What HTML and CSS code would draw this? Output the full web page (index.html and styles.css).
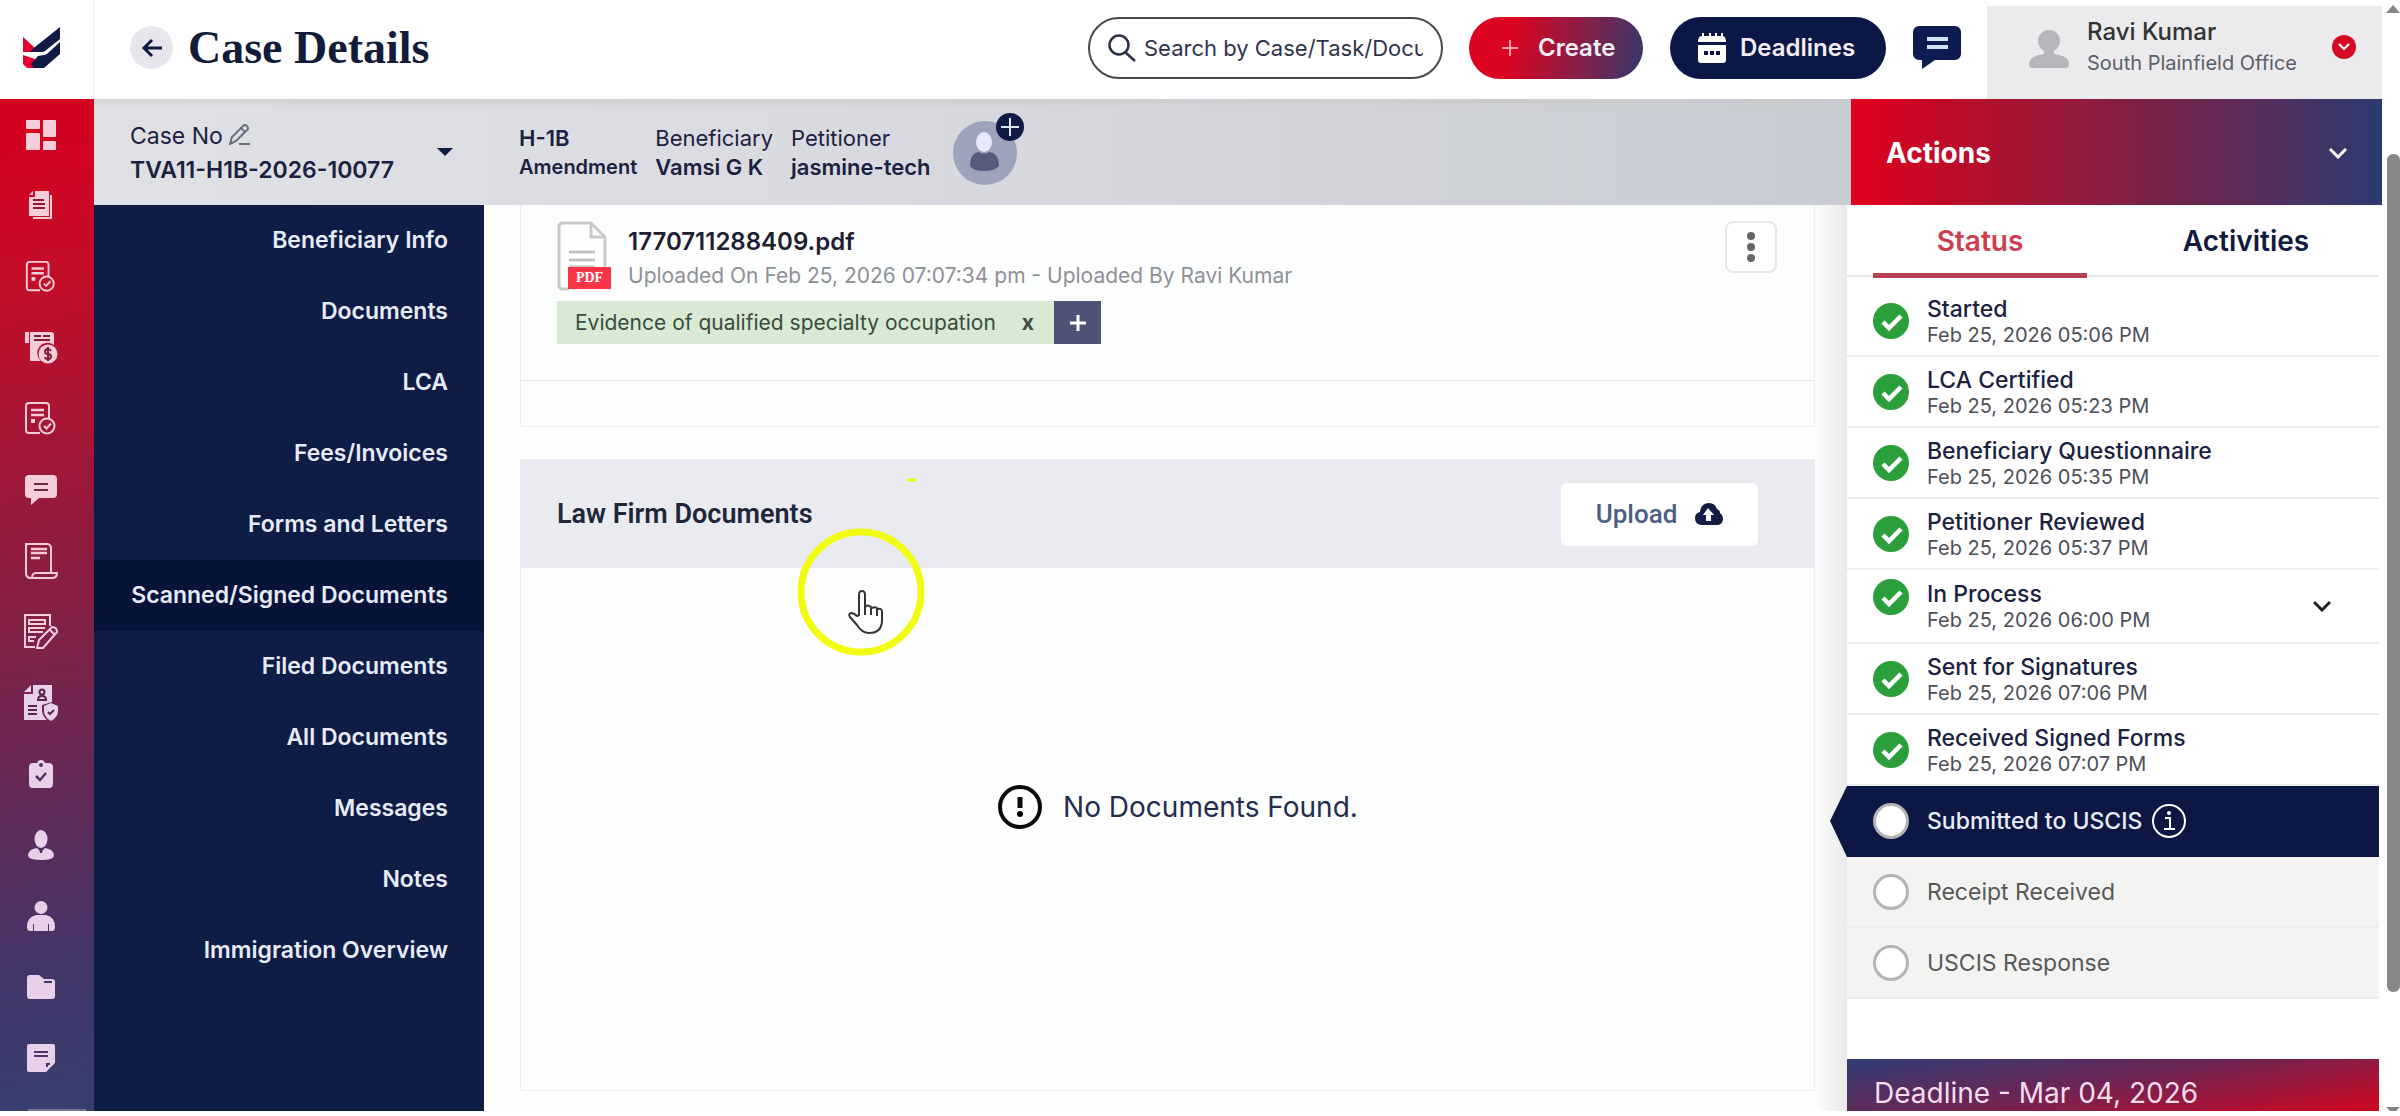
FILE: index.html
```html
<!DOCTYPE html>
<html lang="en">
<head>
<meta charset="utf-8">
<title>Case Details</title>
<link rel="stylesheet" href="styles.css">
</head>
<body>
<svg class="sprite" aria-hidden="true">
  <symbol id="check" viewBox="0 0 36 36"><circle cx="18" cy="18" r="18" fill="#2a9f3c"/><path d="M10 19l6 6 12-12" fill="none" stroke="#fff" stroke-width="4.500"/></symbol>
  <symbol id="doc-check" viewBox="0 0 36 36"><g fill="none" stroke="currentColor" stroke-width="2"><path d="M17 32H6a3 3 0 0 1-3-3V5a3 3 0 0 1 3-3h17a3 3 0 0 1 3 3v12"/><circle cx="24" cy="25" r="7.500"/><path d="M21 25l2.500 2.500 4.500-5"/><path d="M8 9h13M8 14h13" stroke-width="2.500"/><path d="M8 20h4" stroke-width="4"/></g></symbol>
</svg>
<div class="app">
  <aside class="rail">
    <a class="logo" href="#" aria-label="Home"><svg width="38" height="42" viewBox="0 0 38 42"><path fill="#e4002b" d="M1 10l12 11-2 4H1zM1 28l12 4v9H5l-4-4z"/><path fill="#0f1a45" d="M8 25l5-5L38 0v12L23 24q-1 1-3 1z"/><path fill="#0f1a45" d="M9 37l7-8 6-1q2 0 4-2l12-11v12L22 41H12z"/></svg></a>
    <nav class="rail-nav" aria-label="Main">
      <a href="#" aria-label="Dashboard"><svg width="30" height="30" viewBox="0 0 30 30" fill="currentColor"><rect width="14" height="9" rx="1"/><rect y="13" width="14" height="17" rx="1"/><rect x="17" width="13" height="17" rx="1"/><rect x="17" y="21" width="13" height="9" rx="1"/></svg></a>
      <a href="#" aria-label="Cases"><svg width="26" height="30" viewBox="0 0 26 30"><path fill="currentColor" d="M7 0h14v25H1V6h6zM5 0v4H1z"/><path d="M23 4v23H5" fill="none" stroke="currentColor" stroke-width="2"/><path d="M5 9h11M5 13h12M5 17h12" stroke="#8f1730" stroke-width="2"/></svg></a>
      <a href="#" aria-label="Approvals"><svg width="34" height="34"><use href="#doc-check"/></svg></a>
      <a href="#" aria-label="Invoices"><svg width="34" height="34" viewBox="0 0 34 34"><path fill="currentColor" d="M1 1h4v11H1zM6 1h21q3 0 3 3v10a10 10 0 0 0-13 16H6z"/><circle cx="24" cy="23" r="9.500" fill="currentColor"/><path d="M10 5h7M19 5h7M10 9h16" stroke="#7d1c35" stroke-width="2"/><path d="M27 20q-1-2-3-2-3 0-3 2.500t3 2.500 3 2.500-3 2.500q-3 0-3-2M24 16v14" fill="none" stroke="#7d1c35" stroke-width="2"/></svg></a>
      <a href="#" aria-label="Petitions"><svg width="36" height="36"><use href="#doc-check"/></svg></a>
      <a href="#" aria-label="Messages"><svg width="32" height="30" viewBox="0 0 32 30"><path fill="currentColor" d="M4 0h24a4 4 0 0 1 4 4v15a4 4 0 0 1-4 4H14l-8 7v-7H4a4 4 0 0 1-4-4V4a4 4 0 0 1 4-4z"/><path d="M9 9h14M9 15h14" stroke="#6d2740" stroke-width="2"/></svg></a>
      <a href="#" aria-label="Notices"><svg width="34" height="36" viewBox="0 0 34 36"><g fill="none" stroke="currentColor" stroke-width="2"><path d="M27 29V5a4 4 0 0 0-4-4H2v29q0 5 5 5h21q5 0 5-5H12q-4 0-4 5"/><path d="M7 6h16M7 10h16M7 15h9" stroke-width="2.500"/></g></svg></a>
      <a href="#" aria-label="Drafts"><svg width="36" height="36" viewBox="0 0 36 36"><g fill="none" stroke="currentColor" stroke-width="2"><path d="M12 33H2V1h25v11"/><path d="M6 6h16v4H6zM20 18H6v-4h16M13 23H6v4h5"/><path d="M14 34l2-8 13-13q5 0 5 5L20 34zM27 16l5 5"/></g></svg></a>
      <a href="#" aria-label="Compliance"><svg width="36" height="38" viewBox="0 0 36 38"><path fill="currentColor" d="M10 1h19v17l-10 3v6q1 6 5 9H1V10h9zM8 1v7H1z"/><path fill="currentColor" d="M28 19l7 3v6q-1 6-7 9-6-3-7-9v-6z"/><g fill="none" stroke="#5a2548" stroke-width="2"><circle cx="19" cy="8" r="2.500"/><path d="M15 16q0-4 4-4t4 4zM5 22h9M5 26h9M5 30h9M25 28l2 2 4-4"/></g></svg></a>
      <a href="#" aria-label="Tasks"><svg width="24" height="28" viewBox="0 0 24 28"><path fill="currentColor" d="M4 3h4q1-3 4-3t4 3h4q4 0 4 4v17q0 4-4 4H4q-4 0-4-4V7q0-4 4-4z"/><path d="M7 16l4 4 6-7" fill="none" stroke="#55305c" stroke-width="2.500"/><circle cx="12" cy="5" r="2" fill="#55305c"/></svg></a>
      <a href="#" aria-label="Attorneys"><svg width="26" height="30" viewBox="0 0 26 30" fill="currentColor"><ellipse cx="13" cy="9" rx="6.500" ry="9"/><path d="M9 18l4 4 4-4q9 1 9 8-1 4-13 4T0 26q0-7 9-8z"/><path d="M11 18h4l-1 5h-2z" fill="#55305c"/></svg></a>
      <a href="#" aria-label="Clients"><svg width="28" height="30" viewBox="0 0 28 30" fill="currentColor"><circle cx="14" cy="6.500" r="6.500"/><path d="M9 14h10q9 2 9 12 0 4-3 4h-3v-7h-1v7H7v-7H6v7H3q-3 0-3-4 0-10 9-12z"/></svg></a>
      <a href="#" aria-label="Files"><svg width="28" height="24" viewBox="0 0 28 24"><path fill="currentColor" d="M3 0h9l5 4h8q3 0 3 3v14q0 3-3 3H3q-3 0-3-3V3q0-3 3-3z"/><path d="M17 7h8" stroke="#46356b" stroke-width="2"/></svg></a>
      <a href="#" aria-label="Notes"><svg width="28" height="28" viewBox="0 0 28 28"><path fill="currentColor" d="M2 0h24q2 0 2 2v17l-9 9H2q-2 0-2-2V2q0-2 2-2z"/><path d="M7 8h14M7 12h14M20 23v-3h3" fill="none" stroke="#46356b" stroke-width="2"/></svg></a>
    </nav>
    <div class="rail-foot"></div>
  </aside>

  <div class="page">
    <header class="topbar">
      <button class="back" aria-label="Back"><svg width="22" height="20" viewBox="0 0 22 20" fill="none" stroke="#0f1a45" stroke-width="3"><path d="M21 10H3M11 2l-8 8 8 8"/></svg></button>
      <h1>Case Details</h1>
      <label class="search">
        <svg width="28" height="28" viewBox="0 0 28 28" fill="none" stroke="#2c3246" stroke-width="2.500"><circle cx="11" cy="11" r="9.500"/><path d="M17 18l10 9"/></svg>
        <input type="text" aria-label="Search" placeholder="Search by Case/Task/Document">
      </label>
      <button class="pill create"><svg width="18" height="18" viewBox="0 0 18 18" stroke="#f7a5b0" stroke-width="2"><path d="M9 1v16M1 9h16"/></svg>Create</button>
      <button class="pill deadlines"><svg width="28" height="30" viewBox="0 0 28 30"><path fill="#fff" d="M0 9q0-5 3-6h1V0h2v3h5V0h2v3h4V0h2v3h4V0h2v3q3 1 3 6zM0 12h28v15q0 3-3 3H3q-3 0-3-3z"/><path d="M6 20h4M12 20h4M18 20h4" stroke="#0b1744" stroke-width="4"/></svg>Deadlines</button>
      <button class="chat" aria-label="Messages"><svg width="48" height="43" viewBox="0 0 48 43"><path fill="#0e1b52" d="M6 0h36a6 6 0 0 1 6 6v22a6 6 0 0 1-6 6H22L9 43v-9H6a6 6 0 0 1-6-6V6a6 6 0 0 1 6-6z"/><path d="M14 13h21M14 21h21" stroke="#d5e2f5" stroke-width="4"/></svg></button>
      <div class="user">
        <svg width="40" height="38" viewBox="0 0 40 38" fill="#b4b6ba"><ellipse cx="20" cy="11" rx="11" ry="11"/><path d="M15 20h10v4q15 2 15 10 0 4-4 4H4q-4 0-4-4 0-8 15-10z"/></svg>
        <div class="user-text"><strong>Ravi Kumar</strong><span>South Plainfield Office</span></div>
        <button class="user-more" aria-label="Account menu"><svg width="24" height="24" viewBox="0 0 24 24"><circle cx="12" cy="12" r="12" fill="#d50b26"/><path d="M7 9l5 5 5-5" fill="none" stroke="#fff" stroke-width="2"/></svg></button>
      </div>
    </header>

    <div class="band">
      <section class="casebar">
        <div class="case-no">
          <div class="pair"><span>Case No <svg class="pen" width="22" height="22" viewBox="0 0 22 22" fill="none" stroke="#6a6f80" stroke-width="2"><path d="M1 21l2-7L15 2q4 0 4 4L7 18zM12 5l4 4M10 21h11"/></svg></span><b>TVA11-H1B-2026-10077</b></div>
          <button class="caret" aria-label="Choose case"><svg width="16" height="8" viewBox="0 0 16 8"><path d="M0 0h16L8 8z" fill="#0f1a45"/></svg></button>
        </div>
        <div class="pair small"><b>H-1B</b><b class="kind">Amendment</b></div>
        <div class="pair small"><span>Beneficiary</span><b>Vamsi G K</b></div>
        <div class="pair small"><span>Petitioner</span><b>jasmine-tech</b></div>
        <button class="assign" aria-label="Assign person"><svg width="72" height="72" viewBox="0 0 72 72"><circle cx="32" cy="40" r="32" fill="#9da3ba"/><ellipse cx="31" cy="29" rx="8" ry="10" fill="#e6eafa"/><path d="M17 53q0-13 9-14 5 3 10 0 10 1 10 14-4 5-15 5t-14-5z" fill="#575c7c"/><circle cx="57" cy="14" r="14" fill="#0f1a45"/><path d="M57 5v18M48 14h18" stroke="#dfe6f5" stroke-width="2"/></svg></button>
      </section>
      <button class="actions">Actions<svg width="18" height="12" viewBox="0 0 18 12" fill="none" stroke="#fff" stroke-width="3"><path d="M1 2l8 8 8-8"/></svg></button>
    </div>

    <div class="work">
      <nav class="side" aria-label="Case sections">
        <a href="#">Beneficiary Info</a>
        <a href="#">Documents</a>
        <a href="#">LCA</a>
        <a href="#">Fees/Invoices</a>
        <a href="#">Forms and Letters</a>
        <a href="#" class="active">Scanned/Signed Documents</a>
        <a href="#">Filed Documents</a>
        <a href="#">All Documents</a>
        <a href="#">Messages</a>
        <a href="#">Notes</a>
        <a href="#">Immigration Overview</a>
      </nav>

      <main class="main">
        <section class="card files">
          <div class="file">
            <div class="file-icon"><svg width="54" height="70" viewBox="0 0 54 70"><path d="M12 68H6q-4 0-4-4V6q0-4 4-4h28l14 14v34M34 2v14h14" fill="none" stroke="#c9c9c9" stroke-width="3"/><path d="M12 31h26M12 39h26M12 46h26" stroke="#c2c2c2" stroke-width="3"/></svg><span>PDF</span></div>
            <div class="file-text"><strong>1770711288409.pdf</strong><span>Uploaded On Feb 25, 2026 07:07:34 pm - Uploaded By Ravi Kumar</span></div>
            <button class="kebab" aria-label="File menu"><svg width="8" height="30" viewBox="0 0 8 30" fill="#666"><circle cx="4" cy="4" r="4"/><circle cx="4" cy="15" r="4"/><circle cx="4" cy="26" r="4"/></svg></button>
          </div>
          <div class="tags"><span class="tag">Evidence of qualified specialty occupation<button aria-label="Remove tag">x</button></span><button class="tag-add" aria-label="Add tag"><svg width="16" height="16" viewBox="0 0 16 16" stroke="#fff" stroke-width="3"><path d="M8 0v16M0 8h16"/></svg></button></div>
          <div class="files-foot"></div>
        </section>

        <section class="card firm">
          <header><h2>Law Firm Documents</h2><button class="upload">Upload<svg width="28" height="22" viewBox="0 0 28 22"><path fill="#141c46" d="M6 22q-6-1-6-7 0-5 5-6 1-9 9-9 6 0 8 6 3 1 3 4 3 2 3 6 0 5-5 6z"/><path fill="#fff" d="M13 5l6 7h-3v6h-5v-6H8z"/></svg></button></header>
          <p class="empty"><svg width="46" height="46" viewBox="0 0 46 46"><circle cx="23" cy="23" r="20" fill="none" stroke="#0a0a0a" stroke-width="4"/><path d="M23 13v11" stroke="#0a0a0a" stroke-width="5"/><circle cx="23" cy="30" r="3"/></svg>No Documents Found.</p>
        </section>
      </main>

      <aside class="panel">
        <div class="tabs" role="tablist"><button role="tab" class="on" aria-selected="true">Status</button><button role="tab" aria-selected="false">Activities</button></div>
        <ol class="steps">
          <li><svg class="dot"><use href="#check"/></svg><div><strong>Started</strong><time>Feb 25, 2026 05:06 PM</time></div></li>
          <li><svg class="dot"><use href="#check"/></svg><div><strong>LCA Certified</strong><time>Feb 25, 2026 05:23 PM</time></div></li>
          <li><svg class="dot"><use href="#check"/></svg><div><strong>Beneficiary Questionnaire</strong><time>Feb 25, 2026 05:35 PM</time></div></li>
          <li><svg class="dot"><use href="#check"/></svg><div><strong>Petitioner Reviewed</strong><time>Feb 25, 2026 05:37 PM</time></div></li>
          <li class="expandable"><svg class="dot"><use href="#check"/></svg><div><strong>In Process</strong><time>Feb 25, 2026 06:00 PM</time></div><button aria-label="Expand In Process"><svg width="18" height="12" viewBox="0 0 18 12" fill="none" stroke="#222" stroke-width="3"><path d="M1 2l8 8 8-8"/></svg></button></li>
          <li><svg class="dot"><use href="#check"/></svg><div><strong>Sent for Signatures</strong><time>Feb 25, 2026 07:06 PM</time></div></li>
          <li><svg class="dot"><use href="#check"/></svg><div><strong>Received Signed Forms</strong><time>Feb 25, 2026 07:07 PM</time></div></li>
          <li class="current"><span class="dot ring"></span><strong>Submitted to USCIS</strong><svg class="info" width="36" height="36" viewBox="0 0 36 36" fill="none" stroke="#fff" stroke-width="2"><circle cx="18" cy="18" r="16"/><path d="M14 15h5v11M13 26h11"/><circle cx="18" cy="10" r="1"/></svg></li>
          <li class="todo"><span class="dot ring"></span><span>Receipt Received</span></li>
          <li class="todo"><span class="dot ring"></span><span>USCIS Response</span></li>
        </ol>
        <div class="deadline">Deadline - Mar 04, 2026</div>
      </aside>
    </div>
  </div>

  <div class="scroll" aria-hidden="true"><svg width="14" height="8" viewBox="0 0 14 8"><path d="M0 8l7-8 7 8z" fill="#858585"/></svg><i></i><b></b><svg width="14" height="4" viewBox="0 0 14 4"><path d="M0 0h14l-4 4H4z" fill="#858585"/></svg></div>
</div>
<svg class="pointer" width="128" height="178" viewBox="0 -50 128 178" aria-hidden="true"><path d="M110-48h9" stroke="#f2fb12" stroke-width="3"/><circle cx="64" cy="64" r="60" fill="none" stroke="#f2fb12" stroke-width="7"/><path d="M62 87V67q0-4 3-4t3 4v12q2-3 6 0l1 1q3-2 6 1 4-1 4 3v8q0 13-13 13-7 0-12-8l-7-8q-2-3 1-4 3 0 6 3zM68 79v8M74 80v7M80 81v7" fill="#fff" stroke="#333" stroke-width="2" stroke-linejoin="round"/></svg>
</body>
</html>
```
FILE: styles.css
```css
* { box-sizing: border-box; }
body { margin: 0; font-family: Inter, "Liberation Sans", sans-serif; color: #1b2140; background: #fff; }
button { border: 0; background: none; padding: 0; font: inherit; color: inherit; cursor: pointer; }
a { color: inherit; text-decoration: none; }
svg { flex: none; display: block; }
.sprite { position: absolute; width: 0; height: 0; }

.app { display: flex; height: 100vh; padding-bottom: 5px; overflow: hidden; }

.rail { flex: none; width: 94px; display: flex; flex-direction: column; }
.logo { height: 99px; padding: 27px 22px; border-right: 1px solid #eee; }
.rail-nav { flex: 1; min-height: 0; overflow: hidden; background: linear-gradient(170deg, #d40020 3%, #c30d28 18%, #861f43 50%, #453468 84%, #35406f); color: #f4cdd9; }
.rail-nav a { display: grid; place-items: center; height: 71px; width: 82px; }
.rail-nav a:nth-child(n+9) { color: #e8d0e8; }
.rail-foot { height: 2px; background: #77749a; border: 0 solid #35406f; border-width: 0 8px 0 28px; }

.page { flex: 1; min-width: 0; display: flex; flex-direction: column; }
.topbar { flex: none; height: 99px; display: flex; align-items: center; padding: 0 0 4px 36px; }
.back { display: grid; place-items: center; width: 43px; height: 43px; border-radius: 50%; background: #e6e6ec; }
h1 { margin: 0 auto 0 15px; font: bold 46px/60px "Liberation Serif", serif; color: #131b3a; }
.search { display: flex; align-items: center; gap: 8px; width: 355px; height: 62px; padding: 0 18px; border: 2px solid #4a4a4a; border-radius: 31px; }
.search input { flex: 1; min-width: 0; border: 0; outline: 0; padding: 0; background: none; font: 22px/30px Inter, sans-serif; color: #30344a; }
.search input::placeholder { color: #30344a; opacity: 1; }
.pill { display: flex; align-items: center; height: 62px; border-radius: 31px; color: #f3eef5; font-size: 24px; font-weight: 600; }
.create { width: 174px; margin-left: 26px; padding-left: 32px; gap: 19px; background: linear-gradient(100deg, #dc0420 25%, #35386c); }
.deadlines { width: 216px; margin-left: 27px; padding-left: 28px; gap: 14px; background: #0b1744; }
.chat { margin: 0 26px 0 27px; }
.user { width: 395px; height: 93px; margin-top: 10px; display: flex; padding: 10px 26px 0 42px; gap: 18px; background: #ebebee; }
.user > svg { margin-top: 14px; }
.user-text { flex: 1; display: flex; flex-direction: column; white-space: nowrap; }
.user-text strong { font-size: 24px; line-height: 32px; font-weight: 500; color: #333; }
.user-text span { font-size: 20px; line-height: 30px; color: #5b5e6c; }
.user-more { align-self: flex-start; margin-top: 19px; }

.band { flex: none; display: flex; height: 106px; }
.casebar { flex: 1; display: flex; align-items: center; gap: 18px; padding-left: 36px; background: linear-gradient(90deg, #e0e1e5, #dadbe1 40%, #caccd3); box-shadow: inset 0 8px 8px -6px #c8c8c8; white-space: nowrap; }
.case-no { display: flex; align-items: center; width: 371px; }
.case-no .caret { margin-left: auto; margin-right: 48px; }
.pair { display: flex; flex-direction: column; padding-top: 2px; font-size: 23px; line-height: 34px; }
.pair.small { font-size: 22px; line-height: 29px; }
.pair b { font-weight: 600; }
.pair .kind { font-size: 20px; }
.pen { display: inline-block; vertical-align: -1px; }
.assign { margin: -6px 0 0 4px; }
.actions { width: 531px; display: flex; align-items: center; justify-content: space-between; padding: 2px 35px 0; color: #fff; font-size: 28px; font-weight: 700; background: linear-gradient(90deg, #e1001c, #a01635 35%, #6b2750 65%, #2b3b70); }

.work { flex: 1; min-height: 0; display: flex; }
.side { flex: none; width: 390px; background: #0e1c46; overflow: hidden; }
.side a { display: block; height: 71px; line-height: 71px; padding-right: 36px; text-align: right; white-space: nowrap; font-size: 23px; font-weight: 600; color: #e6ebf8; }
.side .active { background: #081339; }

.main { flex: 1; min-width: 0; display: flex; flex-direction: column; padding: 0 32px 20px 36px; background: linear-gradient(270deg, #e9e9e9, #fdfdfd 32px); }
.card { background: #fdfefe; border: 1px solid #ebedef; }
.files { border-top: 0; }
.file { display: flex; padding: 16px 37px 0 36px; }
.file-icon { position: relative; width: 54px; height: 70px; }
.file-icon span { position: absolute; left: 11px; bottom: 2px; width: 43px; height: 22px; background: #fb3449; color: #fff; font: bold 14px/22px "Liberation Serif", serif; text-align: center; }
.file-text { flex: 1; display: flex; flex-direction: column; margin-left: 17px; padding-top: 3px; }
.file-text strong { font-size: 24px; line-height: 35px; font-weight: 600; color: #1d2030; }
.file-text span { font-size: 21px; line-height: 34px; color: #8e9096; }
.kebab { display: grid; place-items: center; width: 52px; height: 52px; border: 2px solid #e7e7e7; border-radius: 8px; background: #fff; }
.tags { display: flex; margin: 8px 36px 36px; height: 43px; }
.tag { display: flex; align-items: center; gap: 26px; padding: 0 20px 0 18px; background: #d7ead3; font-size: 21px; color: #3c4a40; }
.tag button { font-weight: 700; }
.tag-add { display: grid; place-items: center; width: 47px; background: #4c5377; }
.files-foot { height: 46px; border-top: 1px solid #e4e6ec; }
.firm { flex: 1; margin-top: 32px; display: flex; flex-direction: column; }
.firm header { display: flex; align-items: center; justify-content: space-between; height: 108px; padding: 0 56px 0 36px; background: #eaebf0; }
h2 { margin: 0; font: 600 27px/36px Roboto, sans-serif; color: #20263a; }
.upload { display: flex; align-items: center; justify-content: center; gap: 18px; width: 197px; height: 63px; border-radius: 6px; background: #fff; font: 500 26px/36px Roboto, sans-serif; color: #4b5f80; }
.empty { flex: 1; margin: 0 0 44px 20px; display: flex; align-items: center; justify-content: center; gap: 20px; font-size: 28px; color: #242c4e; }

.panel { flex: none; width: 535px; padding-right: 3px; background: #fff; display: flex; flex-direction: column; }
.tabs { display: flex; height: 72px; border-bottom: 2px solid #e8e8e8; }
.tabs button { flex: 1; margin: 0 26px; height: 73px; padding-top: 3px; border-bottom: 5px solid transparent; font-size: 28px; font-weight: 600; color: #121a40; }
.tabs .on { color: #cb3d50; border-color: #b8404f; }
.steps { list-style: none; margin: 9px 0 60px; padding: 0; }
.steps li { display: flex; align-items: center; gap: 18px; height: 71px; padding-left: 26px; border-bottom: 2px solid #ececec; font-size: 23px; white-space: nowrap; }
.steps div { display: flex; flex-direction: column; padding-top: 2px; }
.steps strong { font-weight: 500; line-height: 26px; }
.steps time { font-size: 20px; line-height: 26px; color: #4d5058; }
.dot { width: 36px; height: 36px; }
.ring { border: 3px solid #b4b4b4; border-radius: 50%; background: #fff; }
.steps .expandable { height: 74px; }
.expandable .dot { align-self: flex-start; margin-top: 9px; }
.expandable button { margin: 0 48px 0 auto; }
.steps .current { position: relative; gap: 9px; background: #0c1843; color: #e8ecf8; border-color: #0c1843; }
.current .dot { margin-right: 9px; }
.current::before { content: ""; position: absolute; right: 100%; top: 0; border: solid transparent; border-width: 35px 17px 36px 0; border-right-color: #0c1843; }
.steps .todo { background: #f3f3f2; color: #585858; }
.deadline { flex: 1; min-height: 0; overflow: hidden; padding: 16px 27px 0; background: linear-gradient(170deg, #2e3c75, #6a2655 45%, #c80924 95%); color: #f8dcec; font-size: 28px; line-height: 36px; }

.scroll { flex: none; width: 18px; display: flex; flex-direction: column; align-items: flex-end; padding-top: 5px; overflow: hidden; }
.scroll i { flex: 838; width: 13px; margin-top: 141px; border-radius: 6px; background: #878787; }
.scroll b { flex: 115; }
.pointer { position: absolute; left: 797px; top: 478px; }
```
